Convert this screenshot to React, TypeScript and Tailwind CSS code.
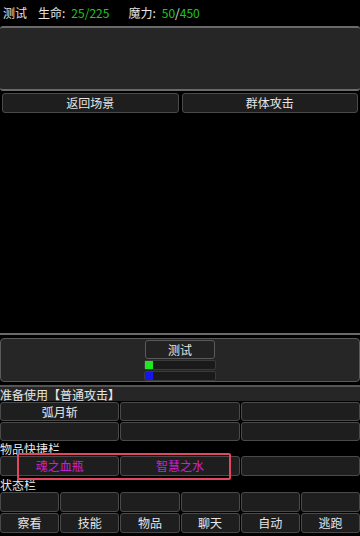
const cell = "flex items-center justify-center rounded-[3px] border border-[#4a4a4a] bg-[#1e1e1e] text-[12px]";

const skills = ["弧月斩", "", "", "", "", ""];
const items = ["魂之血瓶", "智慧之水", ""];
const actions = ["察看", "技能", "物品", "聊天", "自动", "逃跑"];

export default function App() {
  return (
    <div
      className="relative flex h-[536px] w-[360px] flex-col overflow-hidden bg-black text-[12px] leading-none text-[#e6e6e6]"
      style={{ fontFamily: '"Noto Sans CJK SC", "Noto Sans", sans-serif' }}
    >
      {/* status line */}
      <div className="flex h-[26px] items-center px-[3px]">
        <span>测试</span>
        <span className="ml-[11px]">生命:</span>
        <span className="ml-[6px] text-[#21c521]">25/225</span>
        <span className="ml-[19px]">魔力:</span>
        <span className="ml-[6px] text-[#21c521]">50</span>
        <span>/</span>
        <span className="text-[#21c521]">450</span>
      </div>

      {/* message panel */}
      <div className="h-[65px] rounded-[3px] border-y-2 border-[#6a6a6a] bg-[#262626]" />

      {/* scene buttons */}
      <div className="mt-[2px] grid h-[20px] grid-cols-2 gap-[3px] px-[2px]">
        <div className={cell}>返回场景</div>
        <div className={cell}>群体攻击</div>
      </div>

      {/* battle area */}
      <div className="h-[222px] border-b-2 border-[#6a6a6a] bg-black" />

      {/* actor panel */}
      <div className="mt-[3px] flex h-[44px] flex-col items-center rounded-[4px] border border-[#5a5a5a] bg-[#262626] pt-[1px]">
        <div className={`${cell} h-[20px] w-[70px] border-[#5a5a5a] bg-[#222]`}>测试</div>
        <div className="mt-[1px] h-[10px] w-[72px] rounded-[2px] border border-[#3a3a3a] bg-[#1a1a1a]">
          <div className="h-full w-[8px] bg-[#1ee81e]" />
        </div>
        <div className="mt-[1px] h-[10px] w-[72px] rounded-[2px] border border-[#3a3a3a] bg-[#1a1a1a]">
          <div className="h-full w-[8px] bg-[#1515ee]" />
        </div>
      </div>

      {/* ready */}
      <div className="mt-[3px] flex h-[16px] items-center border-t-2 border-[#555] bg-[#262626] pt-[1px]">
        准备使用【普通攻击】
      </div>

      {/* skills */}
      <div className="grid grid-cols-3 gap-x-[1px] gap-y-[1px] pt-[1px]">
        {skills.map((s, i) => (
          <div key={i} className={`${cell} h-[19px]`}>
            {s}
          </div>
        ))}
      </div>

      <div className="flex h-[15px] items-end pb-[1px]">物品快捷栏</div>
      <div className="grid h-[20px] grid-cols-3 gap-[1px]">
        {items.map((it, i) => (
          <div key={i} className={`${cell} text-[#d21ed2]`}>
            {it}
          </div>
        ))}
      </div>

      <div className="flex h-[16px] items-end pb-[1px]">状态栏</div>
      <div className="grid h-[20px] grid-cols-6 gap-[1px]">
        {actions.map((a) => (
          <div key={a} className={cell} />
        ))}
      </div>
      <div className="mt-[1px] grid h-[20px] grid-cols-6 gap-[1px]">
        {actions.map((a) => (
          <div key={a} className={cell}>
            {a}
          </div>
        ))}
      </div>

      {/* highlight box */}
      <div className="absolute left-[17px] top-[453px] h-[27px] w-[214px] rounded-[2px] border-2 border-[#e2475f]" />
    </div>
  );
}
